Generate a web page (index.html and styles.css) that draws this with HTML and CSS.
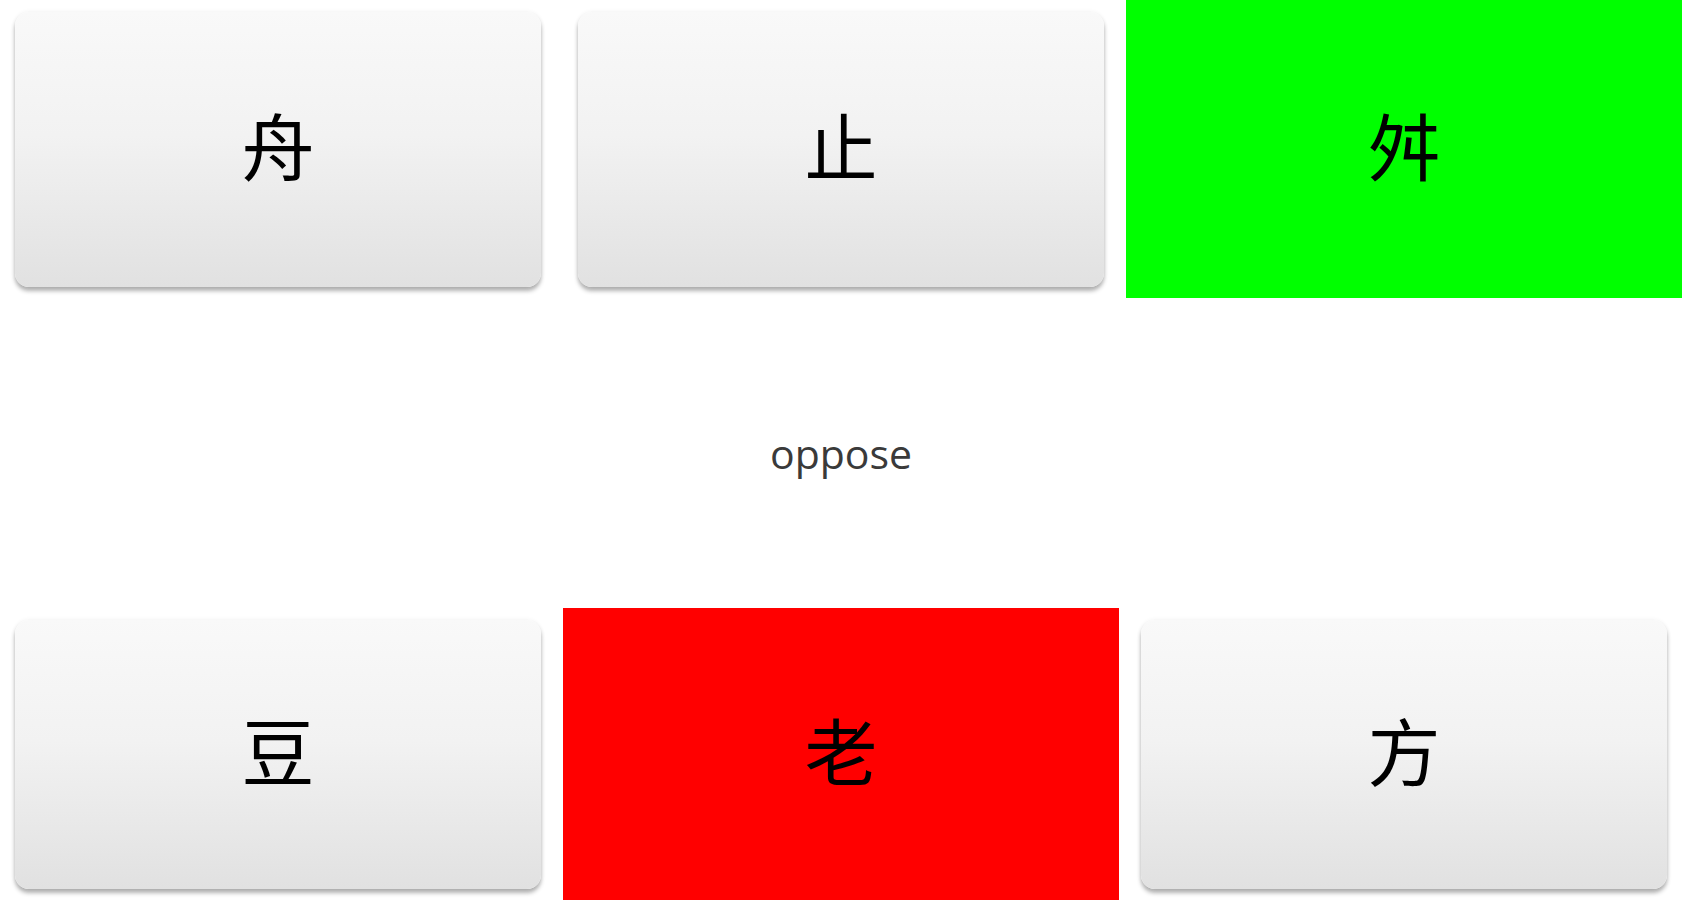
FILE: index.html
```html
<!DOCTYPE html>
<html lang="zh">
<head>
    <meta charset="UTF-8">
    <meta name="viewport" content="width=device-width, initial-scale=1.0">
    <title>Opposites</title>
    <link rel="stylesheet" href="styles.css">
</head>
<body>

<div class="board">

    <!-- Top row of choices -->
    <div class="cell"><button class="key">舟</button></div>
    <div class="cell"><button class="key">止</button></div>
    <div class="cell correct">舛</div>

    <!-- Prompt -->
    <div class="prompt">oppose</div>

    <!-- Bottom row of choices -->
    <div class="cell"><button class="key">豆</button></div>
    <div class="cell wrong">老</div>
    <div class="cell"><button class="key">方</button></div>

</div>

</body>
</html>
```

FILE: styles.css
```css
html, body {
    margin: 0;
    padding: 0;
    background-color: #fff;
}
.board {
    display: grid;
    grid-template-columns: 1fr 1fr 1fr;
    grid-template-rows: 298px 310px 1fr;
    column-gap: 7px;
    height: 100vh;
    overflow: hidden;
}
.cell {
    display: flex;
    font-family: "Noto Sans CJK SC", sans-serif;
    font-size: 73px;
    line-height: 1;
    color: #000;
    align-items: center;
    justify-content: center;
    padding-bottom: 12px;
}
.key {
    flex: 1;
    align-self: stretch;
    margin: 12px 15px -1px;
    border: none;
    border-radius: 14px;
    background: linear-gradient(#f9f9f9, #f2f2f2 45%, #e1e1e1);
    box-shadow: 0 4px 4px rgba(0, 0, 0, 0.3), 0 0 5px rgba(0, 0, 0, 0.06);
    font: inherit;
    color: #000;
    padding: 0 0 12px;
}
.correct {
    background-color: #00ff00;
}
.wrong {
    background-color: #ff0000;
}
.prompt {
    grid-column: 1 / -1;
    display: flex;
    align-items: center;
    justify-content: center;
    font-family: "Open Sans", sans-serif;
    font-size: 41px;
    color: #3a3a3a;
}
```
